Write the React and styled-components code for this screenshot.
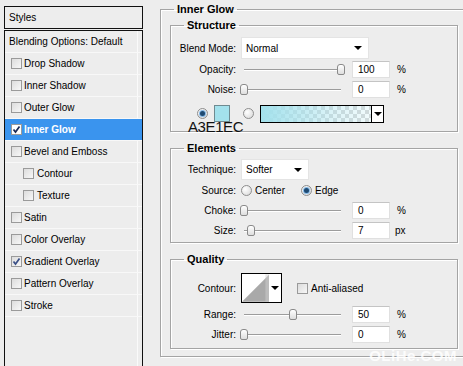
import React from 'react'
import styled, { createGlobalStyle } from 'styled-components'

const Global = createGlobalStyle`
  html, body { margin: 0; padding: 0; }
  body {
    background: #ededed;
    font-family: "Liberation Sans", Arial, sans-serif;
    font-size: 10px;
    color: #000;
    overflow: hidden;
  }
`

const Dialog = styled.div`
  position: relative;
  display: flex;
  width: 463px;
  height: 366px;
  overflow: hidden;
  background: #ededed;
`

/* ---------- left: styles list ---------- */

const StylesPanel = styled.div`
  display: flex;
  flex-direction: column;
  flex-shrink: 0;
  width: 139px;
  margin: 6px 0 0 4px;
`

const PanelHeader = styled.div`
  height: 23px;
  box-sizing: border-box;
  border: 1px solid #111;
  padding-left: 4px;
  display: flex;
  align-items: center;
`

const StyleList = styled.div`
  flex: 1;
  margin-top: 1px;
  border: 1px solid #111;
  border-bottom: none;
  background: linear-gradient(to left, transparent 4px, #fafafa 4px, #fafafa 5px, transparent 5px);
`

const StyleRow = styled.div`
  height: 22px;
  box-sizing: border-box;
  display: flex;
  align-items: center;
  gap: 2px;
  padding-left: ${p => p.$pad}px;
  border-bottom: 1px solid #f8f8f8;
  background: ${p => (p.$active ? '#3a94ee' : 'transparent')};
  color: ${p => (p.$active ? '#fff' : '#000')};
  font-weight: ${p => (p.$active ? 'bold' : 'normal')};
`

const Box = styled.span`
  width: 11px;
  height: 11px;
  box-sizing: border-box;
  flex-shrink: 0;
  border: 1px solid #9a9a9a;
  background: ${p => (p.$white ? '#fff' : 'linear-gradient(135deg, #dcdcdc, #f7f7f7)')};
  display: flex;
  align-items: center;
  justify-content: center;
`

const CheckBox = ({ checked, white }) => (
  <Box $white={white}>
    {checked && (
      <svg width="9" height="9" viewBox="0 0 9 9">
        <path d="M1.5 4.5 L3.5 7 L7.5 1.5" fill="none" stroke={white ? '#1b2a55' : '#3a4f86'} strokeWidth="1.7" />
      </svg>
    )}
  </Box>
)

const styleItems = [
  { name: 'Drop Shadow' },
  { name: 'Inner Shadow' },
  { name: 'Outer Glow' },
  { name: 'Inner Glow', checked: true, active: true },
  { name: 'Bevel and Emboss' },
  { name: 'Contour', indent: true },
  { name: 'Texture', indent: true },
  { name: 'Satin' },
  { name: 'Color Overlay' },
  { name: 'Gradient Overlay', checked: true },
  { name: 'Pattern Overlay' },
  { name: 'Stroke' },
]

/* ---------- right: settings ---------- */

const Settings = styled.div`
  flex-shrink: 0;
  padding: 3px 0 0 17px;
`

const Group = styled.fieldset`
  margin: ${p => p.$mt || 0}px 0 0 0;
  min-width: 0;
  width: ${p => p.$w}px;
  box-sizing: border-box;
  padding: ${p => p.$pad};
  border: 1px solid #a4a4a4;
  box-shadow: inset 1px 1px 0 #fff, 1px 1px 0 #fff;
`

const Title = styled.legend`
  font-weight: bold;
  font-size: 11px;
  line-height: 13px;
  padding: 0 3px;
  margin-left: ${p => p.$offset}px;
`

const Row = styled.div`
  position: relative;
  display: flex;
  align-items: ${p => p.$top ? 'flex-start' : 'center'};
  height: ${p => p.$h}px;
`

const Label = styled.span`
  width: 65px;
  margin-right: 5px;
  text-align: right;
  flex-shrink: 0;
`

const Select = styled.div`
  width: ${p => p.$w}px;
  height: ${p => p.$h}px;
  box-sizing: border-box;
  background: #fff;
  border: 1px solid #e4e4e4;
  display: flex;
  align-items: center;
  justify-content: space-between;
  padding: 0 6px 0 4px;
`

const Arrow = styled.span`
  width: 0;
  height: 0;
  border-left: 4px solid transparent;
  border-right: 4px solid transparent;
  border-top: 4px solid #000;
`

const Track = styled.div`
  position: relative;
  width: 97px;
  height: 1px;
  margin-left: 3px;
  background: #9c9c9c;
  box-shadow: 0 1px 0 #fff;
`

const Thumb = styled.span`
  position: absolute;
  top: -5px;
  width: 8px;
  height: 11px;
  box-sizing: border-box;
  border: 1px solid #8a8a8a;
  border-radius: 3px 3px 2px 2px;
  background: linear-gradient(#fff, #dedede);
`

const NumBox = styled.div`
  width: 38px;
  height: 17px;
  box-sizing: border-box;
  margin-left: 11px;
  padding-left: 5px;
  background: #fff;
  border: 1px solid #e0e0e0;
  border-top-color: #c4c4c4;
  display: flex;
  align-items: center;
`

const Unit = styled.span`
  margin-left: ${p => p.$ml ?? 7}px;
`

const SliderRow = ({ label, h, pct, value, unit }) => (
  <Row $h={h}>
    <Label>{label}</Label>
    <Track>
      <Thumb style={{ left: `calc(${pct}% - 4px)` }} />
    </Track>
    <NumBox>{value}</NumBox>
    <Unit $ml={unit === 'px' ? 5 : 7}>{unit}</Unit>
  </Row>
)

const Radio = styled.span`
  width: 11px;
  height: 11px;
  box-sizing: border-box;
  flex-shrink: 0;
  margin-left: ${p => p.$ml || 0}px;
  border-radius: 50%;
  border: 1px solid #8e8e8e;
  background: radial-gradient(circle at 35% 35%, #fff, #d6d6d6);
  display: flex;
  align-items: center;
  justify-content: center;
  &::after {
    content: '';
    width: 5px;
    height: 5px;
    border-radius: 50%;
    background: ${p => (p.$on ? '#1e4a72' : 'transparent')};
    box-shadow: ${p => (p.$on ? '0 0 0 1px #86b9e6' : 'none')};
  }
`

const RadioText = styled.span`
  margin-left: 3px;
`

const Swatch = styled.span`
  width: 16px;
  height: 17px;
  box-sizing: border-box;
  margin-left: 6px;
  border: 1px solid #6f8a90;
  background: #a3e1ec;
`

const GradientBox = styled.div`
  display: flex;
  width: 124px;
  height: 18px;
  box-sizing: border-box;
  margin-left: 6px;
  border: 1px solid #000;
`

const GradientFill = styled.div`
  flex: 1;
  background:
    linear-gradient(to right, #a3e1ec, rgba(163, 225, 236, 0.35) 70%, rgba(163, 225, 236, 0.15)),
    repeating-conic-gradient(#d8d8d8 0 25%, #fff 0 50%) 0 0 / 8px 8px;
`

const DropPart = styled.div`
  width: 11px;
  border-left: 1px solid #000;
  background: #fff;
  display: flex;
  align-items: center;
  justify-content: center;
`

const ColorNote = styled.span`
  position: absolute;
  left: 17px;
  top: 20px;
  font-size: 15px;
  line-height: 15px;
  letter-spacing: -0.4px;
  color: #111;
`

const ContourBox = styled.div`
  display: flex;
  width: 41px;
  height: 30px;
  box-sizing: border-box;
  border: 1px solid #000;
  background: #fff;
`

const ContourDrop = styled.div`
  width: 12px;
  display: flex;
  align-items: center;
  justify-content: center;
`

const Watermark = styled.span`
  position: absolute;
  right: 6px;
  bottom: 2px;
  font-size: 15px;
  font-weight: bold;
  letter-spacing: 0.5px;
  color: rgba(255, 255, 255, 0.85);
`

export default function App() {
  return (
    <Dialog>
      <Global />
      <StylesPanel>
        <PanelHeader>Styles</PanelHeader>
        <StyleList>
          <StyleRow $pad={4}>Blending Options: Default</StyleRow>
          {styleItems.map(it => (
            <StyleRow key={it.name} $pad={it.indent ? 18 : 6} $active={it.active}>
              <CheckBox checked={it.checked} white={it.active} />
              <span style={{ marginLeft: it.indent ? 1 : 0 }}>{it.name}</span>
            </StyleRow>
          ))}
        </StyleList>
      </StylesPanel>

      <Settings>
        <Group $w={330} $pad="3px 0 7px 9px">
          <Title $offset={4}>Inner Glow</Title>

          <Group $w={288} $pad="5px 0 3px 0">
            <Title $offset={13}>Structure</Title>
            <Row $h={22}>
              <Label>Blend Mode:</Label>
              <Select $w={128} $h={22}>
                Normal
                <Arrow />
              </Select>
            </Row>
            <SliderRow label="Opacity:" h={20} pct={100} value="100" unit="%" />
            <SliderRow label="Noise:" h={20} pct={0} value="0" unit="%" />
            <Row $h={29}>
              <Radio $on $ml={26} />
              <Swatch />
              <Radio $ml={13} />
              <GradientBox>
                <GradientFill />
                <DropPart>
                  <Arrow />
                </DropPart>
              </GradientBox>
              <ColorNote>A3E1EC</ColorNote>
            </Row>
          </Group>

          <Group $w={288} $mt={10} $pad="4px 0 2px 0">
            <Title $offset={13}>Elements</Title>
            <Row $h={21}>
              <Label>Technique:</Label>
              <Select $w={68} $h={21}>
                Softer
                <Arrow />
              </Select>
            </Row>
            <Row $h={21}>
              <Label>Source:</Label>
              <Radio />
              <RadioText>Center</RadioText>
              <Radio $on $ml={16} />
              <RadioText>Edge</RadioText>
            </Row>
            <SliderRow label="Choke:" h={19} pct={0} value="0" unit="%" />
            <SliderRow label="Size:" h={20} pct={7} value="7" unit="px" />
          </Group>

          <Group $w={288} $mt={10} $pad="6px 0 4px 0">
            <Title $offset={13}>Quality</Title>
            <Row $h={32}>
              <Label>Contour:</Label>
              <ContourBox>
                <svg width="28" height="28" viewBox="0 0 28 28">
                  <polygon points="0,28 28,0 28,28" fill="#a9a9a9" />
                  <rect x="24" y="0" width="4" height="28" fill="#cfcfcf" opacity="0.5" />
                </svg>
                <ContourDrop>
                  <Arrow />
                </ContourDrop>
              </ContourBox>
              <span style={{ marginLeft: 15 }}>
                <CheckBox />
              </span>
              <RadioText>Anti-aliased</RadioText>
            </Row>
            <SliderRow label="Range:" h={20} pct={50} value="50" unit="%" />
            <SliderRow label="Jitter:" h={20} pct={0} value="0" unit="%" />
          </Group>
        </Group>
      </Settings>

      <Watermark>OLiHe.COM</Watermark>
    </Dialog>
  )
}
